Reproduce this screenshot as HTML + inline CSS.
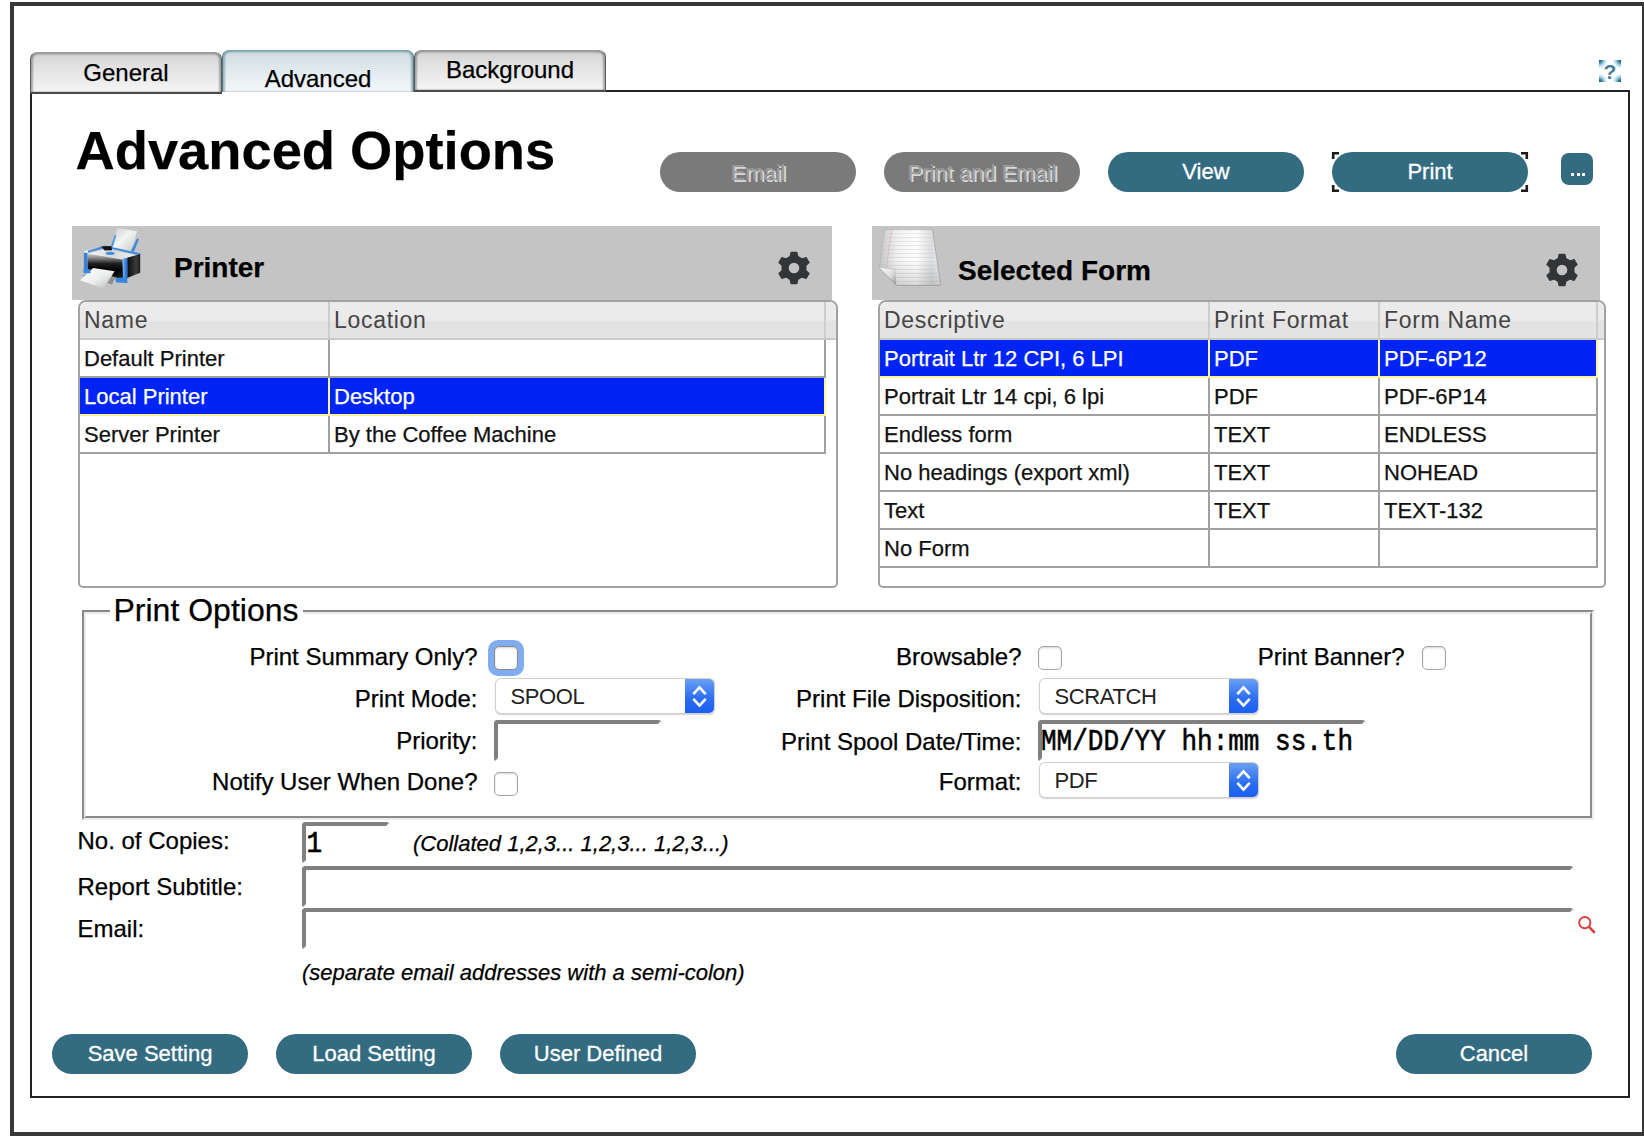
<!DOCTYPE html>
<html><head><meta charset="utf-8">
<style>
html,body{margin:0;padding:0;}
body{-webkit-font-smoothing:antialiased;width:1644px;height:1144px;overflow:hidden;background:#ffffff;position:relative;font-family:"Liberation Sans",sans-serif;color:#000;}
.a{position:absolute;}
.t{position:absolute;white-space:pre;line-height:1;-webkit-text-stroke:0.25px currentColor;}
.s22{font-size:22px;}
.s24{font-size:24px;}
.r{text-align:right;}
.outer{left:10px;top:2px;width:1636px;height:1134px;border:4px solid #383838;box-sizing:border-box;}
.panel{left:30px;top:90px;width:1600px;height:1008px;border:2px solid #222;box-sizing:border-box;}
.tab{position:absolute;box-sizing:border-box;height:42px;width:192px;border-radius:7px 7px 0 0;}
.tabg{background:linear-gradient(#d2d2d2,#e0e0e0 30%,#ececec 70%,#f6f6f6);border:1px solid #5a5a5a;border-top-color:#9a9a9a;border-bottom:2px solid #4a4a4a;box-shadow:inset 2px 0 2px rgba(0,0,0,.28),inset -2px 0 2px rgba(0,0,0,.28),inset 0 2px 2px rgba(0,0,0,.12);}
.taba{background:linear-gradient(#cfdce2,#dae5ea 30%,#eaf0f3 70%,#f5f8f9);border:1px solid #4d7a8c;border-top-color:#7aa0ae;border-bottom:none;box-shadow:inset 2px 0 2px rgba(30,80,100,.35),inset -2px 0 2px rgba(30,80,100,.35),inset 0 2px 2px rgba(30,80,100,.15);}
.btn{position:absolute;box-sizing:border-box;height:40px;width:196px;border-radius:20px;background:#336b80;color:#fff;font-size:22px;line-height:40px;text-align:center;-webkit-text-stroke:0.3px #fff;}
.dis{line-height:42px;background:#7a7a7a;color:#9c9c9c;-webkit-text-stroke:0;text-shadow:2px 2px 0 #d8d8d8;}

.tbl{position:absolute;box-sizing:border-box;border:2px solid #a2a2a2;border-radius:8px 8px 5px 5px;background:#fff;overflow:hidden;}
.hdr{position:absolute;top:0;left:0;right:0;height:36px;background:linear-gradient(#ebebeb 0,#ebebeb 48%,#e2e2e2 56%,#e4e4e4 100%);border-bottom:2px solid #c9c9c9;}
.hd{position:absolute;top:0;width:2px;height:36px;background:#cdcdcd;}
.ht{position:absolute;white-space:pre;line-height:1;font-size:23px;color:#454545;letter-spacing:0.7px;}
.row{position:absolute;height:36px;border-bottom:2px solid #a0a0a0;}
.vl{position:absolute;width:2px;background:#a0a0a0;}
.sel{background:#0024f4;border-bottom-color:#fff39a;}
.ct{position:absolute;white-space:pre;line-height:1;font-size:22px;color:#111;-webkit-text-stroke:0.25px currentColor;}
.sel .ct{color:#fff;}

.fs1{position:absolute;box-sizing:border-box;border:2px solid;border-color:#8a8a8a #ececec #ececec #8a8a8a;}
.fs2{position:absolute;box-sizing:border-box;border:2px solid;border-color:#ececec #8a8a8a #8a8a8a #ececec;left:0;top:0;right:0;bottom:0;}
.cb{position:absolute;box-sizing:border-box;width:24px;height:24px;border-radius:5px;border:1.5px solid #a6a6a6;background:#fff;box-shadow:inset 0 1px 2px rgba(0,0,0,.18);}
.sl{position:absolute;box-sizing:border-box;width:218px;height:34px;border-radius:5px;background:#fff;box-shadow:0 0 0 1px #d0d0d0, 0 1px 1.5px 1px rgba(0,0,0,.18);overflow:hidden;}
.slb{position:absolute;right:0;top:0;width:29px;height:34px;background:linear-gradient(#6aa0f2,#2a6cf2 60%,#1b5ff0);}
.slt{position:absolute;white-space:pre;line-height:1;font-size:22px;color:#222;top:7px;left:15px;letter-spacing:-0.4px;}
.inp{position:absolute;box-sizing:border-box;border:4px solid;border-color:#808080 #fff #fff #808080;border-radius:4px;background:#fff;height:42px;}
</style></head><body>
<div class="a outer"></div>
<div class="a panel"></div>

<!-- tabs -->
<div class="tab tabg" style="left:30px;top:52px;"></div>
<div class="tab taba" style="left:222px;top:50px;"></div>
<div class="tab tabg" style="left:414px;top:50px;"></div>
<div class="t s24" style="left:30px;width:192px;text-align:center;top:61px;">General</div>
<div class="t s24" style="left:222px;width:192px;text-align:center;top:66.5px;">Advanced</div>
<div class="t s24" style="left:414px;width:192px;text-align:center;top:58px;">Background</div>

<!-- title -->
<div class="t" style="left:75.5px;top:124px;font-size:54.3px;font-weight:bold;">Advanced Options</div>

<!-- top buttons -->
<div class="btn dis" style="left:660px;top:152px;">Email</div>
<div class="btn dis" style="left:884px;top:152px;">Print and Email</div>
<div class="btn" style="left:1108px;top:152px;">View</div>
<div class="btn" style="left:1332px;top:152px;">Print</div>


<!-- dots button -->
<div class="a" style="left:1561px;top:153px;width:32px;height:32px;border-radius:8px;background:#336b80;"></div>
<div class="a" style="left:1571px;top:172.5px;width:3px;height:3px;background:#fff;"></div>
<div class="a" style="left:1576.5px;top:172.5px;width:3px;height:3px;background:#fff;"></div>
<div class="a" style="left:1582px;top:172.5px;width:3px;height:3px;background:#fff;"></div>
<!-- print focus brackets -->
<svg class="a" style="left:1330px;top:150px" width="200" height="44" viewBox="0 0 200 44">
<path d="M3.2 9V3.2H9M3.2 35V40.8H9M196.8 9V3.2H191M196.8 35V40.8H191" fill="none" stroke="#1c1c1c" stroke-width="2.6"/>
</svg>

<!-- help icon -->
<div class="a" style="left:1599px;top:60px;width:22px;height:22px;background:radial-gradient(circle at 0 0,#15506c 0,#3f7c98 2.5px,#a8d8ea 5.5px,rgba(255,255,255,0) 8.5px),radial-gradient(circle at 100% 0,#15506c 0,#3f7c98 2.5px,#a8d8ea 5.5px,rgba(255,255,255,0) 8.5px),radial-gradient(circle at 0 100%,#15506c 0,#3f7c98 2.5px,#a8d8ea 5.5px,rgba(255,255,255,0) 8.5px),radial-gradient(circle at 100% 100%,#15506c 0,#3f7c98 2.5px,#a8d8ea 5.5px,rgba(255,255,255,0) 8.5px),#fff;"></div>
<div class="t" style="left:1599px;width:22px;text-align:center;top:61px;font-size:21px;font-weight:bold;color:#4a7c98;-webkit-text-stroke:0;">?</div>

<!-- printer header -->
<div class="a" style="left:72px;top:226px;width:760px;height:74px;background:#c4c4c4;"></div>
<div class="t" style="left:174px;top:254px;font-size:28px;font-weight:bold;">Printer</div>
<!-- form header -->
<div class="a" style="left:872px;top:226px;width:728px;height:74px;background:#c4c4c4;"></div>
<div class="t" style="left:958px;top:257px;font-size:28px;font-weight:bold;">Selected Form</div>
<svg class="a" style="left:774.00px;top:247.60px" width="40" height="40" viewBox="0 0 40 40"><g fill="#333638" stroke="#333638" stroke-width="1.3" stroke-linejoin="round"><polygon points="15.80,10.50 17.20,4.30 22.80,4.30 24.20,10.50"/><polygon points="26.13,11.61 32.20,9.73 35.00,14.57 30.33,18.89"/><polygon points="30.33,21.11 35.00,25.43 32.20,30.27 26.13,28.39"/><polygon points="24.20,29.50 22.80,35.70 17.20,35.70 15.80,29.50"/><polygon points="13.87,28.39 7.80,30.27 5.00,25.43 9.67,21.11"/><polygon points="9.67,18.89 5.00,14.57 7.80,9.73 13.87,11.61"/><circle cx="20" cy="20" r="11.9"/></g><circle cx="20" cy="20" r="5.3" fill="#c4c4c4"/></svg>
<svg class="a" style="left:1542.00px;top:250.30px" width="40" height="40" viewBox="0 0 40 40"><g fill="#333638" stroke="#333638" stroke-width="1.3" stroke-linejoin="round"><polygon points="15.80,10.50 17.20,4.30 22.80,4.30 24.20,10.50"/><polygon points="26.13,11.61 32.20,9.73 35.00,14.57 30.33,18.89"/><polygon points="30.33,21.11 35.00,25.43 32.20,30.27 26.13,28.39"/><polygon points="24.20,29.50 22.80,35.70 17.20,35.70 15.80,29.50"/><polygon points="13.87,28.39 7.80,30.27 5.00,25.43 9.67,21.11"/><polygon points="9.67,18.89 5.00,14.57 7.80,9.73 13.87,11.61"/><circle cx="20" cy="20" r="11.9"/></g><circle cx="20" cy="20" r="5.3" fill="#c4c4c4"/></svg>
<svg class="a" style="left:72px;top:222px" width="80" height="75" viewBox="0 0 1220 1144">
<defs>
<linearGradient id="pp" x1="0" y1="0" x2="1" y2="1"><stop offset="0" stop-color="#c9cccd"/><stop offset=".45" stop-color="#f4f5f5"/><stop offset="1" stop-color="#c0c3c4"/></linearGradient>
<linearGradient id="pf" x1="0" y1="0" x2="0" y2="1"><stop offset="0" stop-color="#d0d0d0"/><stop offset=".16" stop-color="#8a8a8a"/><stop offset=".38" stop-color="#1e1e1e"/><stop offset=".6" stop-color="#050505"/><stop offset="1" stop-color="#222"/></linearGradient>
<linearGradient id="ps" x1="0" y1="0" x2="1" y2="0"><stop offset="0" stop-color="#0a0a0a"/><stop offset=".7" stop-color="#3c3c3c"/><stop offset="1" stop-color="#1a1a1a"/></linearGradient>
<linearGradient id="po" x1="0" y1="0" x2="1" y2="1"><stop offset="0" stop-color="#ffffff"/><stop offset=".55" stop-color="#eceeee"/><stop offset="1" stop-color="#b4b8b8"/></linearGradient>
<linearGradient id="pt" x1="0" y1="0" x2="1" y2="0"><stop offset="0" stop-color="#fafafa"/><stop offset=".5" stop-color="#d8d8d8"/><stop offset="1" stop-color="#f0f0f0"/></linearGradient>
<linearGradient id="pb" x1="0" y1="0" x2="1" y2="0"><stop offset="0" stop-color="#8fc0f5"/><stop offset=".5" stop-color="#3d8be6"/><stop offset="1" stop-color="#1f5fc0"/></linearGradient>
</defs>
<polygon points="690,92 990,140 905,470 600,420" fill="url(#pp)"/>
<polygon points="596,362 652,198 676,206 622,382" fill="#4a94e8"/>
<polygon points="900,440 990,250 1022,262 942,458" fill="#3f88dc"/>
<polygon points="186,462 500,358 1040,476 1040,510 1000,500 520,392 232,470 190,505" fill="#3d8ae2"/>
<polygon points="240,484 528,408 985,510 780,575" fill="url(#pt)"/>
<polygon points="188,440 240,432 250,500 190,505" fill="#e8eef4"/>
<polygon points="442,372 600,366 612,432 500,436" fill="#151515"/>
<ellipse cx="582" cy="478" rx="70" ry="25" fill="#3b8de8"/>
<polygon points="236,484 780,575 790,880 236,728" fill="url(#pf)"/>
<polygon points="842,545 1040,490 1040,775 842,856" fill="url(#ps)"/>
<polygon points="768,562 845,548 848,862 778,870" fill="url(#pb)"/>
<polygon points="182,474 235,470 238,728 180,736" fill="#3a80d8"/>
<polygon points="269,670 702,752 700,815 272,735" fill="#030303"/>
<polygon points="150,820 290,770 660,850 610,955" fill="#8e9090"/>
<polygon points="120,888 322,701 650,752 495,994 435,1001" fill="url(#po)"/>
<polygon points="172,716 280,722 285,780 180,780" fill="#3a8ae4"/>
<polygon points="662,852 842,848 845,930 672,922" fill="#3686e0"/>
</svg>
<svg class="a" style="left:872px;top:226px" width="80" height="70" viewBox="0 0 1307 1144">
<defs>
<linearGradient id="fp" x1="0" y1="0" x2="1" y2="0"><stop offset="0" stop-color="#c4c6c8"/><stop offset=".3" stop-color="#f2f2f2"/><stop offset=".6" stop-color="#ffffff"/><stop offset=".85" stop-color="#dcdddf"/><stop offset="1" stop-color="#f0f0f0"/></linearGradient><linearGradient id="fd" x1="0" y1="0" x2="0" y2="1"><stop offset="0" stop-color="#000" stop-opacity="0"/><stop offset=".55" stop-color="#000" stop-opacity="0"/><stop offset="1" stop-color="#000" stop-opacity=".13"/></linearGradient>
<linearGradient id="fc" x1="0" y1="0" x2="1" y2="1"><stop offset="0" stop-color="#ffffff"/><stop offset=".6" stop-color="#d9dadb"/><stop offset="1" stop-color="#8d8f91"/></linearGradient>
</defs>
<polygon points="212,72 995,72 1132,978 398,978 128,690" fill="#8a8a8a" opacity=".6"/>
<polygon points="205,62 985,62 1120,965 390,965 120,680" fill="url(#fp)" stroke="#a0a2a4" stroke-width="6"/>
<line x1="196" y1="125" x2="994" y2="125" stroke="#c4c6c8" stroke-width="7"/><line x1="187" y1="190" x2="1004" y2="190" stroke="#c4c6c8" stroke-width="7"/><line x1="178" y1="255" x2="1014" y2="255" stroke="#c4c6c8" stroke-width="7"/><line x1="170" y1="320" x2="1024" y2="320" stroke="#c4c6c8" stroke-width="7"/><line x1="161" y1="385" x2="1033" y2="385" stroke="#c4c6c8" stroke-width="7"/><line x1="152" y1="450" x2="1043" y2="450" stroke="#c4c6c8" stroke-width="7"/><line x1="143" y1="515" x2="1053" y2="515" stroke="#c4c6c8" stroke-width="7"/><line x1="134" y1="580" x2="1062" y2="580" stroke="#c4c6c8" stroke-width="7"/><line x1="125" y1="645" x2="1072" y2="645" stroke="#c4c6c8" stroke-width="7"/><line x1="148" y1="710" x2="1082" y2="710" stroke="#c4c6c8" stroke-width="7"/><line x1="210" y1="775" x2="1092" y2="775" stroke="#c4c6c8" stroke-width="7"/><line x1="272" y1="840" x2="1101" y2="840" stroke="#c4c6c8" stroke-width="7"/><line x1="333" y1="905" x2="1111" y2="905" stroke="#c4c6c8" stroke-width="7"/>
<polygon points="205,62 985,62 1120,965 390,965 120,680" fill="url(#fd)"/>
<line x1="320" y1="66" x2="232" y2="700" stroke="#dc9090" stroke-width="6"/>
<polygon points="120,680 372,705 392,962" fill="url(#fc)" stroke="#9a9c9e" stroke-width="5"/>
</svg>
<div class="tbl" style="left:78px;top:300px;width:760px;height:288px;">
<div class="hdr"></div><div class="hd" style="left:248px;"></div><div class="hd" style="left:744px;"></div><div class="ht" style="left:4px;top:6.5px;">Name</div><div class="ht" style="left:254px;top:6.5px;">Location</div>
<div class="row" style="left:0;top:38px;width:746px;"><div class="ct" style="left:4px;top:8.4px;">Default Printer</div><div class="ct" style="left:254px;top:8.4px;"></div><div class="vl" style="left:248px;top:0;height:36px;background:#a0a0a0"></div><div class="vl" style="left:744px;top:0;height:36px;background:#a0a0a0"></div></div>
<div class="row sel" style="left:0;top:76px;width:746px;"><div class="ct" style="left:4px;top:8.4px;">Local Printer</div><div class="ct" style="left:254px;top:8.4px;">Desktop</div><div class="vl" style="left:248px;top:0;height:36px;background:#fff39a"></div><div class="vl" style="left:744px;top:0;height:36px;background:#fff39a"></div></div>
<div class="row" style="left:0;top:114px;width:746px;"><div class="ct" style="left:4px;top:8.4px;">Server Printer</div><div class="ct" style="left:254px;top:8.4px;">By the Coffee Machine</div><div class="vl" style="left:248px;top:0;height:36px;background:#a0a0a0"></div><div class="vl" style="left:744px;top:0;height:36px;background:#a0a0a0"></div></div>
</div>
<div class="tbl" style="left:878px;top:300px;width:728px;height:288px;">
<div class="hdr"></div><div class="hd" style="left:328px;"></div><div class="hd" style="left:498px;"></div><div class="hd" style="left:716px;"></div><div class="ht" style="left:4px;top:6.5px;">Descriptive</div><div class="ht" style="left:334px;top:6.5px;">Print Format</div><div class="ht" style="left:504px;top:6.5px;">Form Name</div>
<div class="row sel" style="left:0;top:38px;width:718px;"><div class="ct" style="left:4px;top:8.4px;">Portrait Ltr 12 CPI, 6 LPI</div><div class="ct" style="left:334px;top:8.4px;">PDF</div><div class="ct" style="left:504px;top:8.4px;">PDF-6P12</div><div class="vl" style="left:328px;top:0;height:36px;background:#fff39a"></div><div class="vl" style="left:498px;top:0;height:36px;background:#fff39a"></div><div class="vl" style="left:716px;top:0;height:36px;background:#fff39a"></div></div>
<div class="row" style="left:0;top:76px;width:718px;"><div class="ct" style="left:4px;top:8.4px;">Portrait Ltr 14 cpi, 6 lpi</div><div class="ct" style="left:334px;top:8.4px;">PDF</div><div class="ct" style="left:504px;top:8.4px;">PDF-6P14</div><div class="vl" style="left:328px;top:0;height:36px;background:#a0a0a0"></div><div class="vl" style="left:498px;top:0;height:36px;background:#a0a0a0"></div><div class="vl" style="left:716px;top:0;height:36px;background:#a0a0a0"></div></div>
<div class="row" style="left:0;top:114px;width:718px;"><div class="ct" style="left:4px;top:8.4px;">Endless form</div><div class="ct" style="left:334px;top:8.4px;">TEXT</div><div class="ct" style="left:504px;top:8.4px;">ENDLESS</div><div class="vl" style="left:328px;top:0;height:36px;background:#a0a0a0"></div><div class="vl" style="left:498px;top:0;height:36px;background:#a0a0a0"></div><div class="vl" style="left:716px;top:0;height:36px;background:#a0a0a0"></div></div>
<div class="row" style="left:0;top:152px;width:718px;"><div class="ct" style="left:4px;top:8.4px;">No headings (export xml)</div><div class="ct" style="left:334px;top:8.4px;">TEXT</div><div class="ct" style="left:504px;top:8.4px;">NOHEAD</div><div class="vl" style="left:328px;top:0;height:36px;background:#a0a0a0"></div><div class="vl" style="left:498px;top:0;height:36px;background:#a0a0a0"></div><div class="vl" style="left:716px;top:0;height:36px;background:#a0a0a0"></div></div>
<div class="row" style="left:0;top:190px;width:718px;"><div class="ct" style="left:4px;top:8.4px;">Text</div><div class="ct" style="left:334px;top:8.4px;">TEXT</div><div class="ct" style="left:504px;top:8.4px;">TEXT-132</div><div class="vl" style="left:328px;top:0;height:36px;background:#a0a0a0"></div><div class="vl" style="left:498px;top:0;height:36px;background:#a0a0a0"></div><div class="vl" style="left:716px;top:0;height:36px;background:#a0a0a0"></div></div>
<div class="row" style="left:0;top:228px;width:718px;"><div class="ct" style="left:4px;top:8.4px;">No Form</div><div class="ct" style="left:334px;top:8.4px;"></div><div class="ct" style="left:504px;top:8.4px;"></div><div class="vl" style="left:328px;top:0;height:36px;background:#a0a0a0"></div><div class="vl" style="left:498px;top:0;height:36px;background:#a0a0a0"></div><div class="vl" style="left:716px;top:0;height:36px;background:#a0a0a0"></div></div>
</div>

<!-- print options fieldset -->
<div class="fs1" style="left:82px;top:610px;width:1512px;height:210px;"><div class="fs2"></div></div>
<div class="a" style="left:110px;top:600px;width:193px;height:20px;background:#ffffff;"></div>
<div class="t" style="left:113.5px;top:594px;font-size:32px;">Print Options</div>
<div class="t r" style="right:1166.5px;top:645.0px;font-size:24px;">Print Summary Only?</div>
<div class="t r" style="right:1166.5px;top:687.0px;font-size:24px;">Print Mode:</div>
<div class="t r" style="right:1166.5px;top:728.8px;font-size:24px;">Priority:</div>
<div class="t r" style="right:1166.5px;top:770.4px;font-size:24px;">Notify User When Done?</div>
<div class="t r" style="right:622.5px;top:644.5px;font-size:24px;">Browsable?</div>
<div class="t r" style="right:622.5px;top:687.1px;font-size:24px;">Print File Disposition:</div>
<div class="t r" style="right:622.5px;top:729.7px;font-size:24px;">Print Spool Date/Time:</div>
<div class="t r" style="right:622.5px;top:770.4px;font-size:24px;">Format:</div>
<div class="t r" style="right:239.5px;top:644.5px;font-size:24px;">Print Banner?</div>
<div class="a" style="left:488px;top:640px;width:36px;height:36px;border-radius:10px;background:#80acf0;"></div>
<div class="cb" style="left:494px;top:646px;border-color:#8a8a8a;"></div>
<div class="cb" style="left:494px;top:772px;"></div>
<div class="cb" style="left:1038px;top:646px;"></div>
<div class="cb" style="left:1422px;top:646px;"></div>
<div class="sl" style="left:495.5px;top:679px;"><div class="slb"></div><svg class="a" style="right:0;top:0" width="29" height="34" viewBox="0 0 29 34"><path d="M8.3 15.2L14.5 8.4L20.7 15.2M8.3 19.8L14.5 26.6L20.7 19.8" fill="none" stroke="#fff" stroke-width="2.6"/></svg><div class="slt">SPOOL</div></div>
<div class="sl" style="left:1039.5px;top:679px;"><div class="slb"></div><svg class="a" style="right:0;top:0" width="29" height="34" viewBox="0 0 29 34"><path d="M8.3 15.2L14.5 8.4L20.7 15.2M8.3 19.8L14.5 26.6L20.7 19.8" fill="none" stroke="#fff" stroke-width="2.6"/></svg><div class="slt">SCRATCH</div></div>
<div class="sl" style="left:1039.5px;top:763px;"><div class="slb"></div><svg class="a" style="right:0;top:0" width="29" height="34" viewBox="0 0 29 34"><path d="M8.3 15.2L14.5 8.4L20.7 15.2M8.3 19.8L14.5 26.6L20.7 19.8" fill="none" stroke="#fff" stroke-width="2.6"/></svg><div class="slt">PDF</div></div>
<div class="inp" style="left:494px;top:720px;width:168px;"></div>
<div class="inp" style="left:1038px;top:720px;width:328px;"></div>
<div class="t" style="left:1041px;top:727.8px;font-size:26px;font-family:'Liberation Mono',monospace;-webkit-text-stroke:0.5px #000;transform:scaleY(1.1);transform-origin:0 0;">MM/DD/YY hh:mm ss.th</div>
<div class="t" style="left:77.5px;top:828.9px;font-size:24px;">No. of Copies:</div>
<div class="t" style="left:77.5px;top:874.7px;font-size:24px;">Report Subtitle:</div>
<div class="t" style="left:77.5px;top:916.7px;font-size:24px;">Email:</div>
<div class="inp" style="left:302px;top:822px;width:88px;"></div>
<div class="t" style="left:306.5px;top:829.5px;font-size:26px;font-family:'Liberation Mono',monospace;-webkit-text-stroke:0.6px #000;transform:scaleY(1.1);transform-origin:0 0;">1</div>
<div class="t" style="left:413px;top:832.7px;font-size:22px;font-style:italic;">(Collated 1,2,3... 1,2,3... 1,2,3...)</div>
<div class="inp" style="left:302px;top:866px;width:1272px;"></div>
<div class="inp" style="left:302px;top:908px;width:1272px;"></div>
<div class="t" style="left:302px;top:961.7px;font-size:22px;font-style:italic;">(separate email addresses with a semi-colon)</div>
<svg class="a" style="left:1577px;top:915px" width="20" height="20" viewBox="0 0 20 20"><circle cx="7.8" cy="7.6" r="5.6" fill="none" stroke="#dc3c3c" stroke-width="1.9"/><path d="M11.6 11.4L17.8 17.8" stroke="#dc3c3c" stroke-width="2.6"/></svg>
<div class="btn" style="left:52px;top:1034px;">Save Setting</div>
<div class="btn" style="left:276px;top:1034px;">Load Setting</div>
<div class="btn" style="left:500px;top:1034px;">User Defined</div>
<div class="btn" style="left:1396px;top:1034px;">Cancel</div>
</body></html>
